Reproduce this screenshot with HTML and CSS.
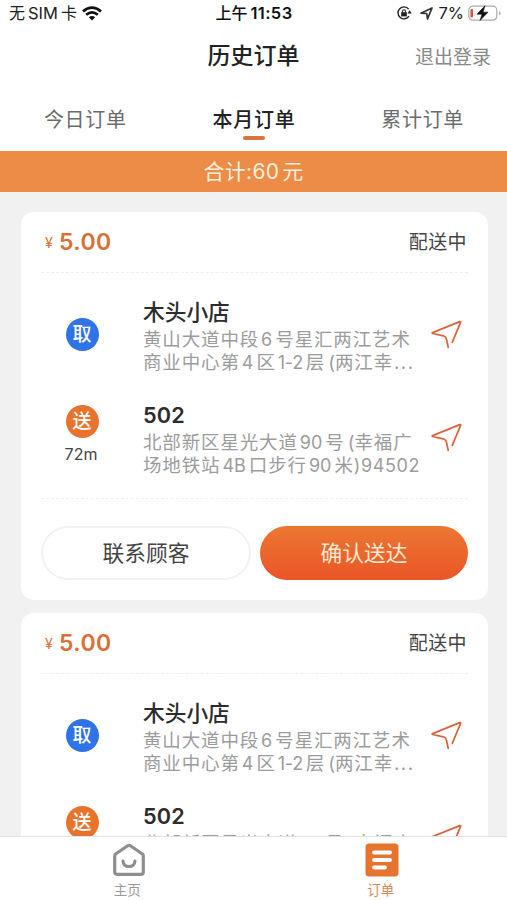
FILE: index.html
```html
<!DOCTYPE html>
<html lang="zh-CN">
<head>
<meta charset="utf-8">
<title>历史订单</title>
<link rel="stylesheet" href="styles.css">
</head>
<body>
<svg class="defs" width="0" height="0">
  <symbol id="send" viewBox="0 0 32 30"><path d="M18.2 28.3 16.4 20Q16 17.7 13.4 16.8L2.6 14.5Q1.7 14 2.6 13.6L29.8 2.6Q31 2.3 30.6 3.4L22.3 23.3" fill="none" stroke="#d96238" stroke-width="1.7" stroke-linejoin="round" stroke-linecap="round"/></symbol>
</svg>
<div class="app">
  <div class="status">
    <div class="carrier"><span>无<b>SIM</b>卡</span>
      <svg width="20" height="15" viewBox="0 0 20 15"><g fill="none" stroke="#111" stroke-width="2.7"><path d="M1 5.4Q10-2.2 19 5.4"/><path d="M4.2 8.8Q10 3.8 15.8 8.8"/></g><path d="M6.8 11.3Q10 8.7 13.2 11.3L10 14.5Z" fill="#111"/></svg>
    </div>
    <div class="time">上午<b>11:53</b></div>
    <div class="indicators">
      <svg class="lock" width="15" height="14" viewBox="0 0 15 14"><path d="M11.6 3A6 6 0 1 0 12 10.2" fill="none" stroke="#222" stroke-width="1.4"/><path d="M10.4 7.6 12.6 4.2 14.8 7.6Z" fill="#222"/><path d="M4.2 6.2h5.6v4.2H4.2z" fill="#222"/><path d="M5.5 6.6V5.2a1.5 1.5 0 0 1 3 0v1.4" fill="none" stroke="#222" stroke-width="1.1"/></svg>
      <svg class="locate" width="13" height="13" viewBox="0 0 13 13"><path d="M1 6.2 12 1 7.5 12 6.7 6.5Z" fill="none" stroke="#333" stroke-width="1.7" stroke-linejoin="round"/></svg>
      <span>7%</span>
      <svg class="battery" width="33" height="17" viewBox="0 0 33 17"><rect x=".8" y="1.2" width="28" height="14" rx="4" fill="none" stroke="#aaa" stroke-width="1.2"/><path d="M31 6v4.5q1.5-.7 1.5-2.2T31 6" fill="#aaa"/><rect x="2.4" y="4" width="2.6" height="8.6" rx="1" fill="#df5044"/><path d="M17 .8 9 9.2h5L12 15.5l8-8.3h-5z" fill="#111" stroke="#111" stroke-width=".6"/></svg>
    </div>
  </div>
  <header class="head"><span></span><h1>历史订单</h1><a class="logout">退出登录</a></header>
  <nav class="tabs"><a>今日订单</a><a class="on">本月订单</a><a>累计订单</a></nav>
  <div class="total">合计:<span>60</span>元</div>

  <main class="list">
    <article class="card">
      <div class="top"><div class="price"><i>¥</i>5.00</div><div class="state">配送中</div></div>
      <div class="stop">
        <div class="mark"><span class="dot pick">取</span></div>
        <div class="info"><h2>木头小店</h2>
          <p>黄山大道中段<span class="n">6</span>号星汇两江艺术</p>
          <p>商业中心第<span class="n">4</span>区<span class="n tight">1-2</span>层<span class="open">(</span>两江幸<span class="dots">...</span></p></div>
        <svg class="send" width="32" height="30"><use href="#send"/></svg>
      </div>
      <div class="stop drop">
        <div class="mark"><span class="dot give">送</span><span class="dist">72m</span></div>
        <div class="info"><h2>502</h2>
          <p>北部新区星光大道<span class="n">90</span>号<span class="open">(</span>幸福广</p>
          <p>场地铁站<span class="n">4B</span>口步行<span class="n">90</span>米<span class="end">)94502</span></p></div>
        <svg class="send" width="32" height="30"><use href="#send"/></svg>
      </div>
      <div class="actions"><button class="btn">联系顾客</button><button class="btn primary">确认送达</button></div>
    </article>
    <article class="card">
      <div class="top"><div class="price"><i>¥</i>5.00</div><div class="state">配送中</div></div>
      <div class="stop">
        <div class="mark"><span class="dot pick">取</span></div>
        <div class="info"><h2>木头小店</h2>
          <p>黄山大道中段<span class="n">6</span>号星汇两江艺术</p>
          <p>商业中心第<span class="n">4</span>区<span class="n tight">1-2</span>层<span class="open">(</span>两江幸<span class="dots">...</span></p></div>
        <svg class="send" width="32" height="30"><use href="#send"/></svg>
      </div>
      <div class="stop drop">
        <div class="mark"><span class="dot give">送</span></div>
        <div class="info"><h2>502</h2>
          <p>北部新区星光大道<span class="n">90</span>号<span class="open">(</span>幸福广</p></div>
        <svg class="send" width="32" height="30"><use href="#send"/></svg>
      </div>
    </article>
  </main>

  <footer class="bar">
    <a><svg width="34" height="34" viewBox="0 0 34 34"><path d="M2.7 13Q2.7 11.5 4 10.7L15.2 3Q17 1.8 18.8 3L30 10.7Q31.3 11.5 31.3 13V29Q31.3 31.3 29 31.3H5Q2.7 31.3 2.7 29Z" fill="none" stroke="#8e8e8e" stroke-width="3.2" stroke-linejoin="round"/><path d="M11 18Q11.5 23.6 17 23.6T23 18" fill="none" stroke="#8e8e8e" stroke-width="3" stroke-linecap="round"/></svg><span>主页</span></a>
    <a class="on"><svg width="34" height="34" viewBox="0 0 34 34"><rect x=".5" y=".5" width="33" height="33" rx="3.5" fill="#e6742e"/><path d="M9 9.5H25M9 17H25M9 24.5H20" stroke="#fff" stroke-width="3.8" stroke-linecap="round"/></svg><span>订单</span></a>
  </footer>
</div>
</body>
</html>
```
FILE: styles.css
```css
* { box-sizing: border-box; margin: 0; padding: 0; }
body { background: #fff; font-family: Inter, "Noto Sans CJK SC", sans-serif; color: #333; }
.defs { display: block; }
.app { width: 507px; height: 900px; display: flex; flex-direction: column; overflow: hidden; background: #fff; }
.status { height: 28px; flex: none; display: grid; grid-template-columns: 1fr auto 1fr; align-items: center; padding: 0 6px 2px 9px; font-size: 16px; line-height: 26px; color: #222; white-space: nowrap; }
.carrier { display: flex; align-items: center; gap: 6px; }
.carrier b { font-weight: 400; font-size: 16.5px; margin: 0 3px; }
.carrier svg { margin-left: -1px; }
.time { font-weight: 500; color: #111; margin-right: 2px; }
.time b { font-weight: 600; font-size: 16.5px; margin-left: 3px; letter-spacing: .4px; }
.indicators { display: flex; align-items: center; justify-content: flex-end; }
.lock { margin-right: 8px; }
.locate { margin-right: 5px; }
.indicators span { font-size: 16.5px; }
.battery { margin-left: 4px; }
.head { height: 56px; flex: none; display: grid; grid-template-columns: 1fr auto 1fr; align-items: center; padding: 1px 15px 0; }
.head h1 { font-size: 23px; font-weight: 500; color: #222; line-height: 55px; }
.logout { justify-self: end; font-size: 19px; color: #888; margin: -2px 1px 0 0; }
.tabs { height: 67px; flex: none; display: grid; grid-template-columns: repeat(3, 1fr); padding: 21px 0 0 1px; }
.tabs a { display: flex; flex-direction: column; align-items: center; font-size: 20px; line-height: 30px; letter-spacing: .7px; color: #6c6c6c; }
.tabs .on { color: #222; font-weight: 500; }
.tabs .on::after { content: ""; width: 22px; height: 4px; margin-top: 1px; border-radius: 2px; background: #dc7440; }
.total { height: 41px; flex: none; background: #ec8c46; color: #fff0df; font-size: 21px; line-height: 41px; letter-spacing: .3px; text-align: center; }
.total span { margin-right: 3px; }
.list { flex: 1; min-height: 0; overflow: hidden; background: #f1f1f1; padding: 20px 19px 0 21px; display: flex; flex-direction: column; gap: 13px; }
.card { height: 388px; flex: none; background: #fff; border-radius: 13px; padding: 0 20px; }
.top { height: 61px; display: flex; align-items: center; justify-content: space-between; border-bottom: 1px dashed #efefef; padding: 0 1px 0 3px; }
.price { display: flex; align-items: center; font-size: 23px; font-weight: 600; color: #d97036; letter-spacing: .4px; }
.price i { width: 15px; padding-left: 1px; font-size: 14px; font-style: normal; font-weight: 400; }
.state { font-size: 19px; color: #444; line-height: 28px; letter-spacing: .4px; padding-top: 2px; }
.stop { height: 103px; display: grid; grid-template-columns: 82px 1fr 32px; padding-top: 24px; column-gap: 20px; }
.mark { display: flex; flex-direction: column; align-items: center; padding-top: 21px; }
.dot { width: 33px; height: 33px; flex: none; border-radius: 50%; color: #fff; font-size: 19px; font-weight: 500; line-height: 34px; text-align: center; }
.pick { background: #2f73e6; }
.give { background: #e8732c; }
.dist { font-size: 16px; line-height: 20px; margin: 6px 2px 0 0; color: #444; }
.info { white-space: nowrap; min-width: 0; }
.info h2 { font-size: 21.7px; font-weight: 500; line-height: 30px; height: 31px; color: #2c2c2c; }
.info p { height: 23px; line-height: 23px; font-size: 18.5px; letter-spacing: .85px; color: #9c9c9c; }
.info p span { letter-spacing: 0; }
.n { margin: 0 3px 0 2px; font-size: 18px; }
.info .tight { letter-spacing: -.3px; }
.open { margin-left: 3px; }
.info .dots { letter-spacing: 1.5px; margin-left: 1px; }
.info .end { font-size: 18px; letter-spacing: .6px; }
.send { margin: 22px 0 0 -6px; }
.drop .mark { padding-top: 5px; }
.drop .info h2 { font-weight: 600; letter-spacing: .2px; }
.actions { height: 102px; margin-top: 19px; border-top: 1px dashed #f0f0f0; padding-top: 27px; display: flex; gap: 9px; }
.btn { width: 210px; height: 54px; border: 2px solid #f2f2f2; border-radius: 27px; background: #fff; color: #444; font: 400 21.7px/46px Inter, "Noto Sans CJK SC", sans-serif; }
.primary { width: 208px; border: 0; color: #ffe9d5; background: linear-gradient(#ec7731, #ea5527); }
.bar { height: 64px; flex: none; display: grid; grid-template-columns: 1fr 1fr; border-top: 1px solid #e2e2e2; background: #fff; }
.bar a { display: flex; flex-direction: column; align-items: center; padding: 6px 0 0 1px; font-size: 13.5px; line-height: 20px; color: #999; }
.bar svg { margin-left: 3px; }
.bar span { margin-top: 3px; }
.bar .on { color: #d98a52; }
```
